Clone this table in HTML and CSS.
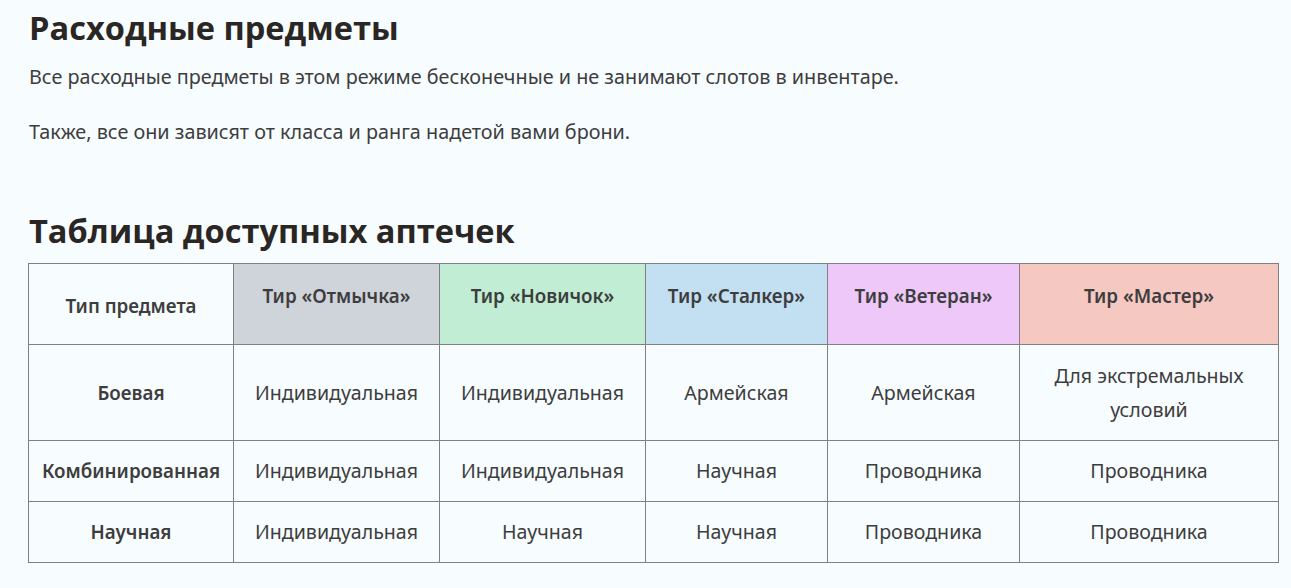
FILE: index.html
```html
<!DOCTYPE html>
<html lang="ru">
<head>
<meta charset="utf-8">
<link rel="stylesheet" href="styles.css">
</head>
<body>
<main class="page">
  <h1 class="title">Расходные предметы</h1>
  <p class="text">Все расходные предметы в этом режиме бесконечные и не занимают слотов в инвентаре.</p>
  <p class="text">Также, все они зависят от класса и ранга надетой вами брони.</p>
  <h2 class="subtitle">Таблица доступных аптечек</h2>
  <table class="kits">
    <colgroup>
      <col class="c1"><col class="c2"><col class="c3"><col class="c4"><col class="c5"><col class="c6">
    </colgroup>
    <thead>
      <tr>
        <th class="type-head">Тип предмета</th>
        <th class="tier t-gray">Тир «Отмычка»</th>
        <th class="tier t-green">Тир «Новичок»</th>
        <th class="tier t-blue">Тир «Сталкер»</th>
        <th class="tier t-purple">Тир «Ветеран»</th>
        <th class="tier t-red">Тир «Мастер»</th>
      </tr>
    </thead>
    <tbody>
      <tr class="tall">
        <th>Боевая</th>
        <td>Индивидуальная</td>
        <td>Индивидуальная</td>
        <td>Армейская</td>
        <td>Армейская</td>
        <td>Для экстремальных<br>условий</td>
      </tr>
      <tr>
        <th>Комбинированная</th>
        <td>Индивидуальная</td>
        <td>Индивидуальная</td>
        <td>Научная</td>
        <td>Проводника</td>
        <td>Проводника</td>
      </tr>
      <tr>
        <th>Научная</th>
        <td>Индивидуальная</td>
        <td>Научная</td>
        <td>Научная</td>
        <td>Проводника</td>
        <td>Проводника</td>
      </tr>
    </tbody>
  </table>
</main>
</body>
</html>
```

FILE: styles.css
```css
html, body {
  margin: 0;
  padding: 0;
  background: #f7fcff;
}

.page {
  padding: 8px 0 0 29px;
  font-family: "Noto Sans", "DejaVu Sans", sans-serif;
  color: #3d3d3d;
}

.title {
  margin: 0;
  font-family: "Open Sans", "Noto Sans", sans-serif;
  font-weight: 700;
  font-size: 32.6px;
  line-height: 40px;
  color: #2a2624;
}

.text {
  margin: 16px 0 0;
  font-size: 19.8px;
  line-height: 26px;
}

.text + .text {
  margin-top: 29px;
}

.subtitle {
  margin: 66px 0 0;
  font-family: "Open Sans", "Noto Sans", sans-serif;
  font-weight: 700;
  font-size: 32.6px;
  line-height: 40px;
  color: #2a2624;
}

.kits {
  margin: 12px 0 0 -1px;
  border-collapse: collapse;
  table-layout: fixed;
  width: 1250px;
  font-size: 19.6px;
  line-height: 34px;
}

.c1 { width: 205px; }
.c2 { width: 206px; }
.c3 { width: 206px; }
.c4 { width: 182px; }
.c5 { width: 192px; }
.c6 { width: 259px; }

.kits th, .kits td {
  border: 1px solid #808080;
  text-align: center;
  vertical-align: middle;
  padding: 13px 4px;
  font-weight: 400;
  color: #3d3d3d;
}

.kits th {
  font-weight: 600;
  font-size: 18.8px;
}

.kits thead th {
  height: 81px;
  box-sizing: border-box;
}

.kits thead .type-head {
  padding-top: 17px;
}

.kits thead .tier {
  vertical-align: top;
  padding-top: 15px;
}

.kits tr.tall td, .kits tr.tall th {
  padding: 13.5px 4px;
}

.t-gray { background: #cfd3da; }
.t-green { background: #c0edd3; }
.t-blue { background: #c3e0f3; }
.t-purple { background: #edc8f9; }
.t-red { background: #f6c8c2; }
```
